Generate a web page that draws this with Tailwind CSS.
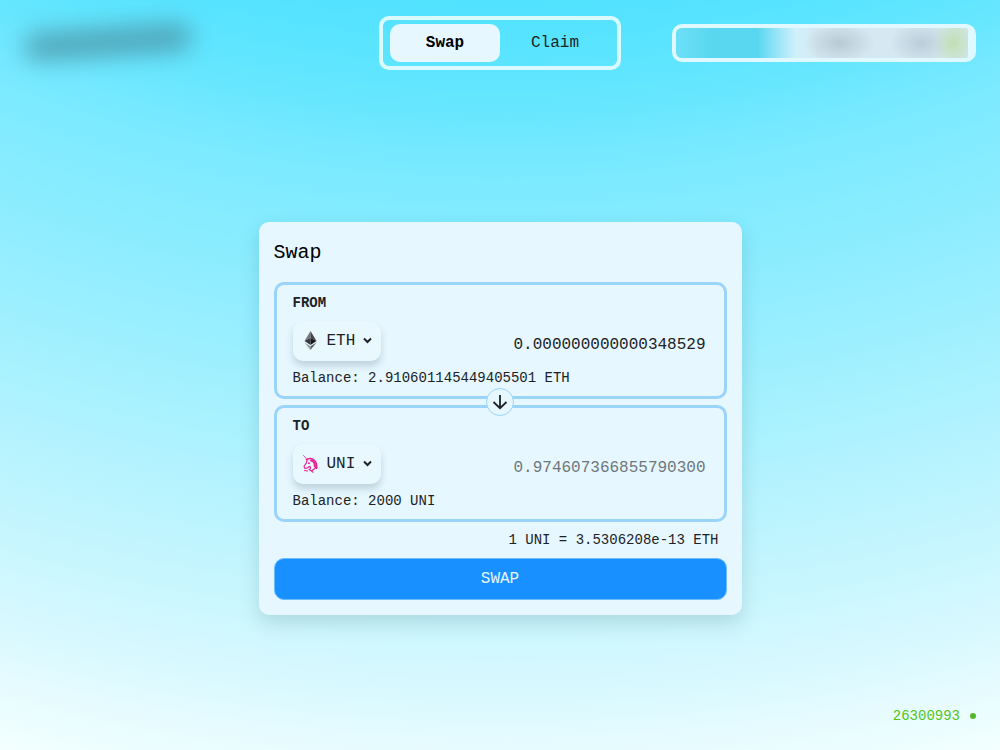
<!DOCTYPE html>
<html lang="en">
<head>
  <meta charset="UTF-8" />
  <meta name="viewport" content="width=device-width, initial-scale=1.0" />
  <title>Swap</title>
  <script src="https://cdn.jsdelivr.net/npm/@tailwindcss/browser@4"></script>
</head>
<body class="relative flex min-h-screen flex-col overflow-x-hidden bg-[radial-gradient(circle_at_50%_-1200px,#50e2ff_1200px,#64e6ff_1300px,#7ceaff_1380px,#94eeff_1535px,#c2f5fe_1779px,#daf9fe_1902px,#e5fbff_1943px,#f2fffe_2010px)] font-['Liberation_Mono',monospace] text-[#1c2226]">

  <header class="grid grid-cols-[1fr_auto_1fr] items-start px-6 pt-4">
    <!-- Logo, blurred -->
    <div class="flex h-13 w-42 items-center" aria-hidden="true">
      <div class="h-7 w-full -rotate-4 rounded-full bg-[#4a8fa0]/75 blur-md"></div>
    </div>

    <nav class="flex rounded-[10px] border-4 border-[#d9fbff] px-[7px] py-1">
      <button class="h-[38px] w-[110px] rounded-[10px] bg-[#e6f7ff] font-bold text-black">Swap</button>
      <button class="h-[38px] w-[110px]">Claim</button>
    </nav>

    <!-- Wallet, blurred -->
    <div class="mt-2 h-[38px] w-full max-w-[304px] justify-self-end overflow-hidden rounded-[10px] border-4 border-r-8 border-[#e0f8ff]" aria-hidden="true">
      <div class="h-full w-full bg-[radial-gradient(ellipse_12%_70%_at_56%_50%,#b9cad3_0%,transparent_100%),radial-gradient(ellipse_7%_90%_at_95%_50%,#c0dfb4_0%,transparent_100%),radial-gradient(ellipse_11%_75%_at_84%_50%,#bccdd9_0%,transparent_100%),linear-gradient(90deg,#6ce0f8_0%,#5ad7f0_12%,#5ad7f0_28%,#a4e7f9_36%,#d0f0fb_41%,#d5e9f2_48%,#d6e9f2_92%,#d2e6e8_100%)]"></div>
    </div>
  </header>

  <main class="flex flex-1 items-start justify-center px-4 pt-[152px] pb-20">
    <section class="w-full max-w-[483px] rounded-[10px] bg-[#e6f7ff] p-[15px] shadow-[0_8px_20px_rgba(0,50,60,0.15)]">
      <h1 class="mb-[13px] text-xl leading-8 text-black">Swap</h1>

      <div class="relative flex flex-col gap-1.5">
        <div class="rounded-[10px] border-3 border-[#9ad4f8] px-4 py-2">
          <h2 class="text-sm leading-5 font-bold">FROM</h2>
          <div class="mt-2 flex items-center justify-between">
            <button class="flex h-10 w-[88px] items-center gap-2 rounded-[10px] bg-[#e9f8ff] pl-2.5 shadow-[0_5px_7px_rgba(0,40,60,0.17)]">
              <svg class="h-5 w-4 shrink-0" viewBox="0 0 16 20">
                <path d="M7.500 0 1.500 10l6-3z" fill="#77777b" />
                <path d="m7.500 0 6 10-6-3z" fill="#444448" />
                <path d="m1.500 10 6-3v7z" fill="#38383c" />
                <path d="m13.500 10-6-3v7z" fill="#18181c" />
                <path d="m1.500 11.500 6 3.700V19z" fill="#98989c" />
                <path d="m13.500 11.500-6 3.700V19z" fill="#5d5d62" />
              </svg>
              <span>ETH</span>
              <svg class="h-2.5 w-2.5 shrink-0" viewBox="0 0 10 10" fill="none" stroke="currentColor" stroke-width="2"><path d="m1 2.500 3.500 3.500L8 2.500" /></svg>
            </button>
            <input aria-label="Amount from" class="mt-2 w-52 min-w-0 bg-transparent pr-0.5 text-right outline-none" value="0.000000000000348529" />
          </div>
          <p class="mt-[7px] text-sm leading-5">Balance: 2.910601145449405501 ETH</p>
        </div>

        <button aria-label="Switch tokens" class="absolute top-1/2 left-1/2 flex size-7 -translate-x-1/2 -translate-y-1/2 items-center justify-center rounded-full border border-[#9ad4f8] bg-[#e6f7ff]">
          <svg class="size-4" viewBox="0 0 16 16" fill="none" stroke="currentColor" stroke-width="1.800"><path d="M8 1v13M1.500 8 8 14.200 14.500 8" /></svg>
        </button>

        <div class="rounded-[10px] border-3 border-[#9ad4f8] px-4 py-2">
          <h2 class="text-sm leading-5 font-bold">TO</h2>
          <div class="mt-2 flex items-center justify-between">
            <button class="flex h-10 w-[88px] items-center gap-2 rounded-[10px] bg-[#e9f8ff] pl-2.5 shadow-[0_5px_7px_rgba(0,40,60,0.17)]">
              <svg class="h-5 w-4 shrink-0" viewBox="0 0 16 20" fill="none" stroke="#e5249a" stroke-linecap="round" stroke-linejoin="round">
                <path d="M.5 1.500 4.500 6" stroke-width=".8" />
                <path d="M3.500 5.500C6.500 4 9.500 4.500 11.500 6.500c2 2 2.500 4.500 2 7" stroke-width="1.600" />
                <path d="M8 6.500c3 .5 4 2.500 3.800 5.500l1.700 2" stroke-width="2.200" />
                <path d="M4 6.500 3.300 9 1 12.500l1 2 2.500-.7 2-1.300" stroke-width="1.200" />
                <path d="M7 12.500c1 1.500.5 2.500-1 3l2.500 1.500 2-1.500 1.500-1M8.500 17l1.500 1.200M1.500 16.500l3 .5" stroke-width="1.200" />
                <path d="M5.500 9.200h1" stroke-width="1.400" />
              </svg>
              <span>UNI</span>
              <svg class="h-2.5 w-2.5 shrink-0" viewBox="0 0 10 10" fill="none" stroke="currentColor" stroke-width="2"><path d="m1 2.500 3.500 3.500L8 2.500" /></svg>
            </button>
            <input aria-label="Amount to" class="mt-2 w-52 min-w-0 bg-transparent pr-0.5 text-right text-[#6f777c] outline-none" value="0.974607366855790300" readonly />
          </div>
          <p class="mt-[7px] text-sm leading-5">Balance: 2000 UNI</p>
        </div>
      </div>

      <p class="my-1.5 pr-2 text-right text-sm leading-6">1 UNI = 3.5306208e-13 ETH</p>
      <button class="h-[42px] w-full rounded-[10px] border border-[#69bdff] bg-[#1890ff] text-[#e6f7ff]">SWAP</button>
    </section>
  </main>

  <!-- Block number -->
  <div class="absolute right-6 bottom-6 flex items-center gap-2.5 text-sm text-[#52c41a]">
    <span>26300993</span>
    <span class="size-1.5 rounded-full bg-[#52b82a]"></span>
  </div>
</body>
</html>
